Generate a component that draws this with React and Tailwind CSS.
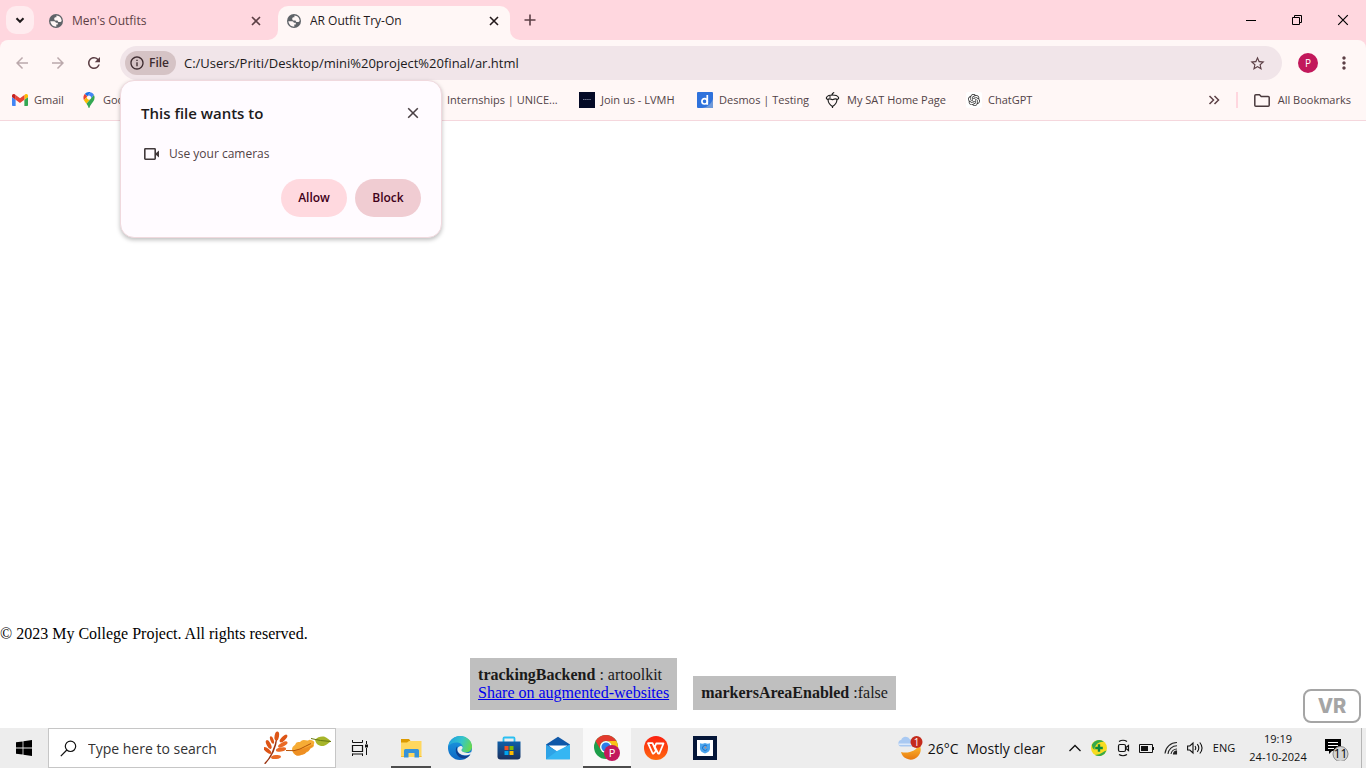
import React from "react";
import { MdArrowBack, MdArrowForward, MdRefresh, MdStarBorder, MdMoreVert, MdInfoOutline } from "react-icons/md";
import { SiOpenai } from "react-icons/si";

const CloseIcon = ({ size = 10, width = 1.6 }) => (
  <svg width={size} height={size} viewBox="0 0 10 10" stroke="currentColor" strokeWidth={width} fill="none" aria-hidden="true">
    <path d="M1 1l8 8M9 1L1 9" />
  </svg>
);

const GlobeIcon = () => (
  <svg width="14" height="14" viewBox="0 0 14 14" className="shrink-0" aria-hidden="true">
    <circle cx="7" cy="7" r="7" fill="#5f6368" />
    <path fill="#fff7f6" d="M1.300 7.200h3.900q1.500 0 1.700 1.500h1.900v1.900H7.300v2.100Q2 12.200 1.300 7.200z" />
    <path fill="#fff7f6" d="M5.200 4.600q0-1.200 1.200-1.300h1V1.400q4.500.2 5.300 5-.4 1.600-1.700 1.500H9.300L8.500 6.400H6q-.8-.3-.8-1.800z" />
  </svg>
);

function Tab({ title, active }) {
  return (
    <div
      role="tab"
      aria-selected={active}
      className={
        "relative flex h-[34px] w-[232px] items-center rounded-t-[10px] pr-[10px] pb-[5px] pl-[9px] " +
        (active ? "bg-[#fff7f6] text-[#24191b]" : "text-[#5c3f45]")
      }
    >
      {active && (
        <>
          <span className="absolute bottom-0 -left-[10px] size-[10px] bg-[#fff7f6]">
            <span className="block size-full rounded-br-[10px] bg-[#ffd7df]" />
          </span>
          <span className="absolute -right-[10px] bottom-0 size-[10px] bg-[#fff7f6]">
            <span className="block size-full rounded-bl-[10px] bg-[#ffd7df]" />
          </span>
        </>
      )}
      <GlobeIcon />
      <span className="ml-[9px] flex-1 truncate text-[12px]">{title}</span>
      <button aria-label={"Close " + title} className="p-px">
        <CloseIcon />
      </button>
    </div>
  );
}

function TabStrip() {
  return (
    <header className="flex h-10 items-start bg-[#ffd7df]">
      <button aria-label="Search tabs" className="mt-[6px] ml-[6px] flex size-7 items-center justify-center rounded-[10px] bg-[#ffecef]">
        <svg width="10" height="7" viewBox="0 0 10 7" fill="none" stroke="#1f1a1b" strokeWidth="2">
          <path d="M1.5 1.2L5 4.8l3.500-3.600" />
        </svg>
      </button>
      <div role="tablist" className="mt-[6px] ml-[6px] flex gap-[6px]">
        <Tab title="Men's Outfits" active={false} />
        <Tab title="AR Outfit Try-On" active={true} />
      </div>
      <button aria-label="New tab" className="mt-[6px] ml-[6px] flex size-7 items-center justify-center text-[#5c3f45]">
        <svg width="12" height="12" viewBox="0 0 12 12" stroke="currentColor" strokeWidth="1.600">
          <path d="M6 .5v11M.5 6h11" />
        </svg>
      </button>
      <div className="ml-auto flex h-10 text-black">
        <button aria-label="Minimize" className="flex w-[46px] items-center justify-center">
          <svg width="10" height="10" viewBox="0 0 10 10"><path d="M0 5h10v1H0z" /></svg>
        </button>
        <button aria-label="Restore" className="flex w-[46px] items-center justify-center">
          <svg width="10" height="10" viewBox="0 0 10 10" fill="none" stroke="currentColor">
            <path d="M.5 2.500h7v7h-7zM2.500 2.500v-2h7v7h-2" />
          </svg>
        </button>
        <button aria-label="Close window" className="flex w-[46px] items-center justify-center">
          <CloseIcon size={12} width={1} />
        </button>
      </div>
    </header>
  );
}

function PermissionDialog() {
  return (
    <div
      role="dialog"
      aria-labelledby="perm-title"
      className="absolute top-full left-0 z-10 flex w-[322px] flex-col rounded-[14px] border border-[#f0d9de] bg-[#fffbff] p-5 shadow-[0_2px_4px_rgba(0,0,0,0.25)]"
    >
      <div className="flex h-6 items-center justify-between">
        <h2 id="perm-title" className="text-[15px] font-semibold text-[#201a1b]">This file wants to</h2>
        <button aria-label="Close dialog" className="mr-[2px] text-[#4a4044]">
          <CloseIcon size={12} width={1.3} />
        </button>
      </div>
      <div className="mt-[19px] flex h-5 items-center gap-[9px] pl-[2px] text-[#524346]">
        <svg width="17" height="14" viewBox="0 0 17 14" fill="none" stroke="#423a3c" strokeWidth="1.600">
          <rect x="1.800" y="1.800" width="10.400" height="10.400" rx="0.600" />
          <path d="M12.500 6.500L16 3.500v7l-3.500-3z" fill="#423a3c" stroke="none" />
        </svg>
        <span className="text-[12px]">Use your cameras</span>
      </div>
      <div className="mt-[15px] flex justify-end gap-2 text-[12px] font-semibold text-[#3f0018]">
        <button className="h-[38px] w-[66px] rounded-full bg-[#ffd9df]">Allow</button>
        <button className="h-[38px] w-[66px] rounded-full bg-[#f0ccd2]">Block</button>
      </div>
    </div>
  );
}

function Toolbar() {
  return (
    <div className="bg-[#ffd7df]">
      <div className="flex h-10 items-end rounded-t-[8px] bg-[#fff7f6] px-1 text-[#5c3f45]">
        <button aria-label="Back" className="flex h-[34px] w-9 items-center justify-center text-[#bba9ac]"><MdArrowBack size={18} /></button>
        <button aria-label="Forward" className="flex h-[34px] w-9 items-center justify-center text-[#bba9ac]"><MdArrowForward size={18} /></button>
        <button aria-label="Reload" className="flex h-[34px] w-9 items-center justify-center"><MdRefresh size={18} /></button>
        <div className="relative ml-2 flex h-[34px] flex-1 items-center rounded-full bg-[#f1e5e9] pr-4 pl-[5px]">
          <button className="flex h-6 w-[51px] items-center gap-1 rounded-full bg-[#d5c3c5] pl-1 text-[12px] font-semibold text-[#3d2b2f]">
            <MdInfoOutline size={16} />
            File
          </button>
          <input
            aria-label="Address"
            defaultValue="C:/Users/Priti/Desktop/mini%20project%20final/ar.html"
            className="ml-2 min-w-0 flex-1 bg-transparent pt-px text-[13px] text-[#201a1b] outline-none"
          />
          <button aria-label="Bookmark this page"><MdStarBorder size={17} /></button>
          <PermissionDialog />
        </div>
        <button aria-label="Profile" className="ml-2 flex h-[34px] w-9 items-center justify-center">
          <span className="flex size-5 items-center justify-center rounded-full bg-[#c2185b] text-[10px] text-white">P</span>
        </button>
        <button aria-label="Menu" className="flex h-[34px] w-9 items-center justify-center"><MdMoreVert size={20} /></button>
      </div>
    </div>
  );
}

const GmailIcon = () => (
  <svg width="16" height="12" viewBox="52 42 88 66">
    <path fill="#4285f4" d="M58 108h14V74L52 59v43c0 3.320 2.690 6 6 6" />
    <path fill="#34a853" d="M120 108h14c3.320 0 6-2.690 6-6V59l-20 15" />
    <path fill="#fbbc04" d="M120 48v26l20-15v-8c0-7.420-8.470-11.650-14.400-7.200" />
    <path fill="#ea4335" d="M72 74V48l24 18 24-18v26L96 92" />
    <path fill="#c5221f" d="M52 51v8l20 15V48l-5.600-4.200c-5.940-4.450-14.400-.22-14.400 7.200" />
  </svg>
);

const MapsIcon = () => (
  <svg width="16" height="16" viewBox="0 0 92.300 132.300">
    <path fill="#1a73e8" d="M60.200 2.200C55.800.8 51 0 46.100 0 32 0 19.300 6.400 10.800 16.500l21.800 18.300L60.200 2.200z" />
    <path fill="#ea4335" d="M10.800 16.500C4.100 24.500 0 34.900 0 46.100c0 8.700 1.700 15.700 4.600 22l28-33.300-21.800-18.300z" />
    <path fill="#4285f4" d="M46.200 28.500c9.800 0 17.700 7.900 17.700 17.700 0 4.300-1.600 8.300-4.200 11.400 0 0 13.900-16.600 27.500-32.700-5.600-10.800-15.300-19-27-22.700L32.600 34.800c3.300-3.800 8.100-6.300 13.600-6.300" />
    <path fill="#fbbc04" d="M46.200 63.800c-9.800 0-17.700-7.900-17.700-17.700 0-4.300 1.500-8.300 4.100-11.300l-28 33.300c4.800 10.600 12.800 19.200 21 29.900l34.100-40.500c-3.300 3.900-8.100 6.300-13.500 6.300" />
    <path fill="#34a853" d="M59.100 109.200c15.400-24.100 33.300-35 33.300-63 0-7.700-1.900-14.900-5.200-21.300L25.600 98c2.600 3.400 5.300 7.300 7.900 11.300 9.400 14.500 6.800 23.100 12.800 23.100s3.400-8.700 12.800-23.200" />
  </svg>
);

const LvmhIcon = () => (
  <svg width="16" height="16" viewBox="0 0 16 16">
    <path fill="#040a26" d="M0 0h16v16H0z" />
    <path stroke="#767c94" strokeWidth="1" strokeDasharray="1.500 .6" d="M4 7.500h8" />
  </svg>
);

const DesmosIcon = () => (
  <svg width="16" height="16" viewBox="0 0 16 16">
    <rect width="16" height="16" rx="1" fill="#2f72dc" />
    <path fill="#6f9ad9" d="M16 7v8a1 1 0 0 1-1 1H5c6-1 9-4 11-9z" />
    <circle cx="7.600" cy="9.300" r="2.700" fill="none" stroke="#fff" strokeWidth="1.700" />
    <path stroke="#fff" strokeWidth="1.700" d="M10.300 3v9.800" />
  </svg>
);

const AcornIcon = () => (
  <svg width="16" height="16" viewBox="0 0 16 16" fill="none" stroke="#1e1e1e">
    <path strokeWidth="1.300" d="M7 3.200C7 1.600 8 .9 9.200.5" />
    <path strokeWidth="1.100" d="M3 7.500c.2 3 1.600 5.300 4.500 7 2.900-1.700 4.300-4 4.500-7" />
    <path strokeWidth="1.200" d="M2.800 7.500Q.8 6.600 1.600 5.200 3 3 7.500 3t5.900 2.200q.8 1.400-1.200 2.300-1.300-1.400-4.700.2-3.400-1.600-4.700-.2z" />
    <path strokeWidth="1.200" d="M7.500 14.500V16M4 5h2" />
  </svg>
);

const BlankIcon = () => <svg width="16" height="16" viewBox="0 0 16 16"><rect width="16" height="16" rx="2" fill="#1cabe2" /></svg>;

const GptIcon = () => (
  <span className="flex size-4 items-center justify-center rounded-[2px] bg-white text-[#333]"><SiOpenai size={12} /></span>
);

const bookmarks = [
  { label: "Gmail", Icon: GmailIcon, width: "w-[69px]" },
  { label: "Goo", Icon: MapsIcon, width: "w-[344px]" },
  { label: "Internships | UNICE...", Icon: BlankIcon, width: "w-[154px]" },
  { label: "Join us - LVMH", Icon: LvmhIcon, width: "w-[118px]" },
  { label: "Desmos | Testing", Icon: DesmosIcon, width: "w-[128px]" },
  { label: "My SAT Home Page", Icon: AcornIcon, width: "w-[141px]" },
  { label: "ChatGPT", Icon: GptIcon, width: "w-[90px]" },
];

function BookmarksBar() {
  return (
    <nav aria-label="Bookmarks" className="flex h-[41px] items-center border-b border-[#f5d7dd] bg-[#fff7f6] pl-3 text-[11px] whitespace-nowrap text-[#524346]">
      {bookmarks.map(({ label, Icon, width }) => (
        <a key={label} href="#" className={"flex shrink-0 items-center gap-[6px] " + width}>
          <Icon />
          {label}
        </a>
      ))}
      <button aria-label="More bookmarks" className="ml-auto">
        <svg width="12" height="10" viewBox="0 0 12 10" fill="none" stroke="#5c3f45" strokeWidth="1.500">
          <path d="M1.500 1l4 4-4 4M6.500 1l4 4-4 4" />
        </svg>
      </button>
      <span className="mr-4 ml-4 h-4 w-[2px] bg-[#ffd7df]" />
      <a href="#" className="mr-[15px] flex items-center gap-2">
        <svg width="16" height="13" viewBox="0 0 16 13" fill="none" stroke="#4a3a3d" strokeWidth="1.500" strokeLinejoin="round">
          <path d="M.8 1.800q0-1 1-1h3.700L7.200 2.500h7q1 0 1 1v7.700q0 1-1 1H1.800q-1 0-1-1z" />
        </svg>
        All Bookmarks
      </a>
    </nav>
  );
}

function Page() {
  return (
    <main className="relative flex flex-1 flex-col justify-end bg-white pb-[18px] font-['Liberation_Serif',serif] text-[16px] leading-[18px] text-black">
      <p>© 2023 My College Project. All rights reserved.</p>
      <div className="mt-[15px] flex items-end justify-center gap-4">
        <div className="bg-[#bfbfbf] p-2 text-[#1a1a1a]">
          <div><b>trackingBackend</b> : artoolkit</div>
          <a href="#" className="block text-[#0000ee] underline">Share on augmented-websites</a>
        </div>
        <div className="bg-[#bfbfbf] p-2 text-[#1a1a1a]"><b>markersAreaEnabled</b> :false</div>
      </div>
      <button className="absolute right-[5px] bottom-[5px] flex h-[34px] w-[58px] items-center justify-center rounded-[8px] border-2 border-[#a5a5a5] bg-white font-['Inter',sans-serif] text-[20px] font-extrabold text-[#a5a5a5]">
        VR
      </button>
    </main>
  );
}

const LeavesIcon = () => (
  <svg width="70" height="34" viewBox="0 0 70 34">
    <path d="M0 32.500Q9 24 12.500 6l1 .3Q12 22 1.500 33z" fill="#9a3412" />
    <g fill="#dd5516">
      <ellipse cx="12.800" cy="5" rx="2.200" ry="4.600" transform="rotate(10 12.800 5)" />
      <ellipse cx="4.700" cy="13.500" rx="2" ry="4.800" transform="rotate(-28 4.700 13.500)" />
      <ellipse cx="19.500" cy="7.500" rx="2" ry="5" transform="rotate(45 19.500 7.500)" />
      <ellipse cx="8" cy="9" rx="1.600" ry="4" transform="rotate(-20 8 9)" />
      <ellipse cx="3.500" cy="19.500" rx="1.800" ry="4.800" transform="rotate(-50 3.500 19.500)" />
    </g>
    <g fill="#ea6a25">
      <ellipse cx="18.800" cy="13.500" rx="2.100" ry="5.200" transform="rotate(62 18.800 13.500)" />
      <ellipse cx="17" cy="18.500" rx="2" ry="5.200" transform="rotate(78 17 18.500)" />
      <ellipse cx="12" cy="26" rx="2" ry="5" transform="rotate(84 12 26)" />
    </g>
    <path fill="#f6ac35" d="M28 18c1-4 3-3 4-6 2-2 4 0 5-2 3-2 5 0 7-.5 2-1.500 4 0 6 1 1 2-1 3 0 4-1 3-4 2-5 5-2 3-4 1-6 4-3 1-4 0-6 1-3-1-5-3-5-6.500z" />
    <path fill="#ee8f22" d="M28.500 19.500Q38 19 49.500 13.500q-1 3-3.500 3.500 0 3-3 3-2 4-5 3.500-4 2.500-7 0z" />
    <path fill="none" stroke="#b45309" strokeWidth="1" d="M22 19.500q9 1 14-1.500t11-5.500" />
    <path fill="#a7b52a" d="M51 9c2-3 6-4 9-3.500 3 1 5 3 7 5-3 1.500-5 5-10 4.500-4-1-5-3-6-6z" />
    <path fill="none" stroke="#66780f" strokeWidth="1" d="M47 7.500Q56 10 67 10.500" />
  </svg>
);

const ExplorerIcon = () => (
  <svg width="24" height="24" viewBox="0 0 24 24">
    <path fill="#dd9a00" d="M2 3h8l1.500 2H20v4H2z" />
    <path fill="#ffd75e" d="M2 6.500h6l2-1.500h12.500v16H2z" />
    <path fill="#3793d8" d="M5 21.500v-7q0-1.500 1.500-1.500h12q1.500 0 1.500 1.500v7h-4.500V17h-6v4.500z" />
    <path fill="#f4bd2f" d="M2 20h3v1H2zM20 20h2.500v1H20z" />
  </svg>
);

const EdgeIcon = () => (
  <svg width="24" height="24" viewBox="0 0 24 24">
    <defs>
      <linearGradient id="edgeTop" x1="0" x2="1" y1=".2" y2=".5">
        <stop offset="0" stopColor="#1f9fe0" /><stop offset=".55" stopColor="#36c5c9" /><stop offset="1" stopColor="#66d84f" />
      </linearGradient>
      <linearGradient id="edgeSwirl" x1="0" x2="0" y1="0" y2="1">
        <stop offset="0" stopColor="#1b9de2" /><stop offset="1" stopColor="#1068c4" />
      </linearGradient>
    </defs>
    <circle cx="12" cy="12" r="12" fill="url(#edgeSwirl)" />
    <path fill="url(#edgeTop)" d="M.4 10C1.600 4 6.500 0 12.200 0 19 0 24 5 24 10.600c0 3.500-2.700 5.900-6 5.900-3 0-4.500-1.200-4.500-2 0-.7 1.300-1.200 1.300-3.200 0-2.600-2.500-4.800-6-4.800C5 6.500 1.800 8.300.4 10z" />
    <path fill="#103f8f" d="M9.200 10.200C7 12.500 7 18.500 12 21.500c3.500 2 7.500 1 10.300-2.700-4 1.900-8 1.200-10.500-.8-2.600-2-3.200-5-2.600-7.800z" />
    <path fill="#ededed" d="M12.600 10q-3.100.6-3.200 3.500c0 3 3 5.500 7 5.700 3 .1 4.500-.6 6.200-1.300l1.900-2.800c-2 1.700-4 2.200-6.500 1.700-3-.5-4.500-1.600-4.500-2.600 0-.8 1.300-1 1.200-2.800-.3-.9-1.100-1.500-2.100-1.400z" />
  </svg>
);

const StoreIcon = () => (
  <svg width="24" height="24" viewBox="0 0 24 24">
    <defs>
      <linearGradient id="storeBag" x1="0" x2="0" y1="0" y2="1"><stop offset="0" stopColor="#0f5fa8" /><stop offset="1" stopColor="#1b315f" /></linearGradient>
    </defs>
    <path fill="none" stroke="#2bc0f2" strokeWidth="1.800" d="M6.500 7V2.500q0-1 1-1h9q1 0 1 1V7" />
    <path fill="url(#storeBag)" d="M.5 5.500h23v15q0 3-3 3h-17q-3 0-3-3z" />
    <path fill="#f25022" d="M7.500 10h4v4h-4z" /><path fill="#7fba00" d="M12.500 10h4v4h-4z" />
    <path fill="#00a4ef" d="M7.500 15h4v4h-4z" /><path fill="#ffb900" d="M12.500 15h4v4h-4z" />
  </svg>
);

const MailIcon = () => (
  <svg width="24" height="24" viewBox="0 0 24 24">
    <path fill="#0f58a8" d="M0 8.500L12 .8l12 7.700v7H0z" />
    <path fill="#fff" d="M2.500 9.500h19L12 16.500z" />
    <path fill="#2ea3e6" d="M0 8.500v14.700h24z" />
    <path fill="#35b6f3" d="M24 8.500v14.700H0L12 14.600z" />
  </svg>
);

const ChromeIcon = () => (
  <svg width="26" height="26" viewBox="0 0 26 26">
    <circle cx="12" cy="12" r="12" fill="#1e9e4a" />
    <path fill="#e33b2e" d="M1.600 6A12 12 0 0 1 22.400 6H12a6 6 0 0 0-5.200 9z" />
    <path fill="#fbc116" d="M22.400 6A12 12 0 0 1 12 24l5.200-9A6 6 0 0 0 12 6z" />
    <circle cx="12" cy="12" r="6" fill="#fff" />
    <circle cx="12" cy="12" r="4.600" fill="#2b7de9" />
    <circle cx="18" cy="18" r="8" fill="#c2185b" />
    <text x="18" y="22" textAnchor="middle" fontSize="11" fill="#fff">P</text>
  </svg>
);

const WpsIcon = () => (
  <svg width="24" height="24" viewBox="0 0 24 24">
    <defs>
      <linearGradient id="wps" x1="0" x2="0" y1="0" y2="1"><stop offset="0" stopColor="#fb2010" /><stop offset="1" stopColor="#ff6a10" /></linearGradient>
    </defs>
    <circle cx="12" cy="12" r="12" fill="url(#wps)" />
    <path fill="none" stroke="#fff" strokeWidth="1.800" strokeLinejoin="round" d="M4 7.200h4.500L12 15l-2.300 2.500h-1zM12.200 7.500h7.300l-4.200 10h-1.200L10.800 11z" />
  </svg>
);

const ShieldAppIcon = () => (
  <svg width="24" height="24" viewBox="0 0 24 24">
    <path fill="#041638" d="M0 0h24v24H0z" /><path fill="#fff" d="M4 4h16v16H4z" />
    <path fill="#4aa5ee" d="M7 7.300q2.500.8 5-.3 2.500 1.100 5 .3v5.200q0 3.300-5 5-5-1.700-5-5z" />
    <path fill="none" stroke="#1f6fc4" strokeWidth="1" d="M14 10a2.600 2.600 0 1 0 .3 3.300" />
    <circle cx="12.500" cy="11.500" r=".9" fill="#c9866a" />
  </svg>
);

const apps = [
  { name: "File Explorer", Icon: ExplorerIcon, open: true },
  { name: "Edge", Icon: EdgeIcon },
  { name: "Store", Icon: StoreIcon },
  { name: "Mail", Icon: MailIcon },
  { name: "Chrome", Icon: ChromeIcon, open: true, current: true },
  { name: "WPS Office", Icon: WpsIcon },
  { name: "Secure Browser", Icon: ShieldAppIcon },
];

const WeatherIcon = () => (
  <svg width="26" height="26" viewBox="0 0 26 26">
    <defs>
      <linearGradient id="moon" x1="0" x2="0" y1="0" y2="1"><stop offset="0" stopColor="#ffc233" /><stop offset="1" stopColor="#e8780f" /></linearGradient>
    </defs>
    <path fill="url(#moon)" d="M22 9a10 10 0 1 1-18 8C11 19 20 16 22 9z" />
    <path fill="#a9c9f2" d="M4 11.500a3.300 3.300 0 0 1 .2-6.500A4.800 4.800 0 0 1 13 4.500a3.500 3.500 0 0 1 1 7z" />
    <path fill="#dce9fa" d="M1.500 8.500h13.500v1.500H1.500z" />
    <circle cx="19.500" cy="7" r="6" fill="#c42b1c" />
    <text x="19.500" y="10.500" textAnchor="middle" fontSize="10" fill="#fff">1</text>
  </svg>
);

const trayIcons = [
  { name: "Show hidden icons", icon: (
    <svg width="14" height="8" viewBox="0 0 14 8" fill="none" stroke="#111" strokeWidth="1.300"><path d="M1.500 7L7 1.500 12.500 7" /></svg>
  ) },
  { name: "Antivirus", icon: (
    <svg width="16" height="16" viewBox="0 0 16 16">
      <circle cx="8" cy="8" r="8" fill="#f7dc20" />
      <path fill="#35a94a" d="M1 4.500A8 8 0 0 1 13 1.800Q8 1.500 5.500 4.500T3.500 10Q.5 8 1 4.500zM15.500 10.500A8 8 0 0 1 4 14.900q5 0 7.500-2.400Q13.500 11 15.500 10.500z" />
      <path stroke="#0d8a3c" strokeWidth="2.400" d="M8 4.200v7.600M4.200 8h7.600" />
    </svg>
  ) },
  { name: "Meet now", icon: (
    <svg width="14" height="18" viewBox="0 0 14 18" fill="none" stroke="#111" strokeWidth="1.200">
      <rect x="2.500" y="5.500" width="7" height="7" rx="1.500" /><path d="M10 8.500l2.500-2v5L10 9.500M3 2.500q4-2.500 8 0M3 15.500q4 2.500 8 0" />
    </svg>
  ) },
  { name: "Battery", icon: (
    <svg width="16" height="9" viewBox="0 0 16 9"><path fill="none" stroke="#111" d="M.5.5h13v8H.5z" /><path fill="#111" d="M2 2h7v5H2zM14 3h1v3h-1z" /></svg>
  ) },
  { name: "Network", icon: (
    <svg width="14" height="14" viewBox="0 0 14 14" fill="none" stroke="#222" strokeWidth="1.100">
      <path d="M1 12.500A12 12 0 0 1 13 1.500M4 13A9 9 0 0 1 13 4.800M7 13a6 6 0 0 1 6-5" /><path d="M9.500 13a3.500 3.500 0 0 1 3-3v3z" fill="#222" />
    </svg>
  ) },
  { name: "Volume", icon: (
    <svg width="17" height="14" viewBox="0 0 17 14" fill="none" stroke="#111" strokeWidth="1.100">
      <path d="M.6 5h2.200L6 2v10L2.800 9H.6zM8 5q1.500 2 0 4M10.300 3.200q3 3.800 0 7.600M12.800 1.500q4.500 5.500 0 11" />
    </svg>
  ) },
];

function Taskbar() {
  return (
    <footer className="flex h-10 items-stretch bg-[#ededed] text-[#111]">
      <button aria-label="Start" className="flex w-12 items-center justify-center">
        <svg width="16" height="16" viewBox="0 0 16 16"><path d="M0 2.300L6.600 1.400v6.200H0zM7.400 1.300L16 0v7.600H7.400zM0 8.400h6.600v6.200L0 13.700zM7.400 8.400H16V16l-8.600-1.300z" /></svg>
      </button>
      <div className="flex w-[288px] items-center border border-[#c6c6c6] bg-white pr-px pl-[11px]">
        <svg width="17" height="17" viewBox="0 0 17 17" fill="none" stroke="#111" strokeWidth="1.200"><circle cx="10.500" cy="6.300" r="5.200" /><path d="M6.800 10L.8 16.200" /></svg>
        <input aria-label="Search" placeholder="Type here to search" className="ml-[11px] w-0 min-w-0 flex-1 bg-transparent text-[14px] outline-none placeholder:text-[#333]" />
        <LeavesIcon />
      </div>
      <button aria-label="Task view" className="flex w-12 items-center justify-center">
        <svg width="18" height="16" viewBox="0 0 18 16" fill="none" stroke="#111">
          <path d="M1.500 0v2.500M11.500 0v2.500M1.500 13.500V16M11.500 13.500V16" /><path d="M1.500 2.500h10M1.500 5.500h10v6h-10zM1.500 14h10" strokeWidth="1.200" /><path d="M15.500 1v3M15.500 8v7" /><path d="M14 4.500h3v3h-3z" fill="#111" stroke="none" />
        </svg>
      </button>
      <div className="ml-[3px] flex gap-px">
        {apps.map(({ name, Icon, open, current }) => (
          <button key={name} aria-label={name} className={"relative flex w-12 items-center justify-center " + (current ? "bg-[#f9f9f9]" : "")}>
            <Icon />
            {open && <span className={"absolute bottom-0 h-[2px] bg-[#4d4d4d] " + (current ? "inset-x-0" : "inset-x-1")} />}
          </button>
        ))}
      </div>
      <div className="ml-auto flex items-stretch">
        <button className="mr-[18px] flex items-center text-[14px] whitespace-nowrap">
          <WeatherIcon />
          <span className="ml-[5px]">26°C</span>
          <span className="ml-2">Mostly clear</span>
        </button>
        {trayIcons.map(({ name, icon }) => (
          <button key={name} aria-label={name} className="flex w-6 items-center justify-center">{icon}</button>
        ))}
        <button className="w-[34px] text-[11px]">ENG</button>
        <button className="w-[74px] text-[11px] leading-[18px]">
          <span className="block">19:19</span>
          <span className="block">24-10-2024</span>
        </button>
        <button aria-label="Notifications" className="flex w-[46px] items-center justify-center">
          <svg width="26" height="26" viewBox="0 0 26 26">
            <path fill="#000" d="M0 4h16v12H7l-3 3v-3H0z" /><path stroke="#fff" d="M3 7.500h10M3 10.500h10M3 13.500h6" />
            <circle cx="15.500" cy="19" r="7.500" fill="#d4d4d4" stroke="#888" />
            <text x="15.500" y="23" textAnchor="middle" fontSize="12" fill="#000">11</text>
          </svg>
        </button>
        <span className="w-[5px] border-l border-[#b5b5b5]" />
      </div>
    </footer>
  );
}

export default function App() {
  return (
    <div className="flex min-h-screen flex-col font-['Open_Sans','Noto_Sans',sans-serif]">
      <TabStrip />
      <Toolbar />
      <BookmarksBar />
      <Page />
      <Taskbar />
    </div>
  );
}
